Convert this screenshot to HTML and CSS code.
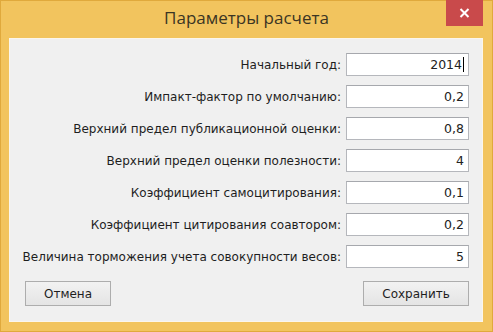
FILE: index.html
```html
<!DOCTYPE html>
<html lang="ru">
<head>
  <meta charset="UTF-8">
  <title>Параметры расчета</title>
  <link rel="stylesheet" href="styles.css">
</head>
<body>

<div class="window">
  <div class="titlebar">
    <div class="title">Параметры расчета</div>
    <div class="close">
      <svg width="11" height="10" viewBox="0 0 11 10">
        <path d="M1.5 1 L9.5 9 M9.5 1 L1.5 9" stroke="#fff" stroke-width="2" fill="none"/>
      </svg>
    </div>
  </div>

  <div class="client">
    <div class="form">
      <label>Начальный год:</label>
      <div class="field">2014<span class="caret"></span></div>

      <label>Импакт-фактор по умолчанию:</label>
      <div class="field">0,2</div>

      <label>Верхний предел публикационной оценки:</label>
      <div class="field">0,8</div>

      <label>Верхний предел оценки полезности:</label>
      <div class="field">4</div>

      <label>Коэффициент самоцитирования:</label>
      <div class="field">0,1</div>

      <label>Коэффициент цитирования соавтором:</label>
      <div class="field">0,2</div>

      <label>Величина торможения учета совокупности весов:</label>
      <div class="field">5</div>
    </div>

    <div class="actions">
      <button class="btn cancel">Отмена</button>
      <button class="btn save">Сохранить</button>
    </div>
  </div>
</div>

</body>
</html>
```

FILE: styles.css
```css
body {
  margin: 0;
  width: 493px;
  height: 332px;
  overflow: hidden;
  background: #f0c35b;
  font-family: 'DejaVu Sans', sans-serif;
}

.window {
  box-sizing: border-box;
  width: 493px;
  height: 332px;
  background: #f2c45e;
  border: 1px solid #e0a93c;
  display: flex;
  flex-direction: column;
}

.titlebar {
  height: 37px;
  display: flex;
  justify-content: center;
  position: relative;
}

.title {
  font-family: 'Open Sans', sans-serif;
  font-size: 17px;
  color: #3b3524;
  padding-top: 5px;
}

.close {
  position: absolute;
  top: -1px;
  right: 9px;
  width: 37px;
  height: 26px;
  background: #c94a4b;
  display: flex;
  align-items: center;
  justify-content: center;
}

.client {
  margin: 0 9px 0 8px;
  height: 284px;
  box-sizing: border-box;
  background: #f0f0f0;
  border: 1px solid #fbf6ec;
  padding: 14px 13px 0 4px;
}

.form {
  display: grid;
  grid-template-columns: 1fr 123px;
  column-gap: 5px;
  row-gap: 9px;
  align-items: center;
}

label {
  text-align: right;
  white-space: nowrap;
  font-size: 12px;
  color: #1e1e1e;
}

.field {
  box-sizing: border-box;
  height: 23px;
  background: #fff;
  border: 1px solid #b5b7bc;
  border-top-color: #a6a8ad;
  font-size: 12.5px;
  color: #222;
  text-align: right;
  padding: 3px 4px 0 0;
  display: flex;
  justify-content: flex-end;
  align-items: flex-start;
}

.caret {
  display: inline-block;
  width: 1px;
  height: 15px;
  background: #000;
  margin-left: 1px;
}

.actions {
  display: flex;
  justify-content: space-between;
  margin-top: 13px;
  padding: 0 0 0 11px;
}

.btn {
  height: 25px;
  font-family: 'DejaVu Sans', sans-serif;
  font-size: 12px;
  color: #1e1e1e;
  background: linear-gradient(#f2f2f2, #e4e4e4);
  border: 1px solid #adadad;
  border-radius: 0;
  padding: 0;
}

.cancel { width: 86px; }
.save { width: 106px; }
```
